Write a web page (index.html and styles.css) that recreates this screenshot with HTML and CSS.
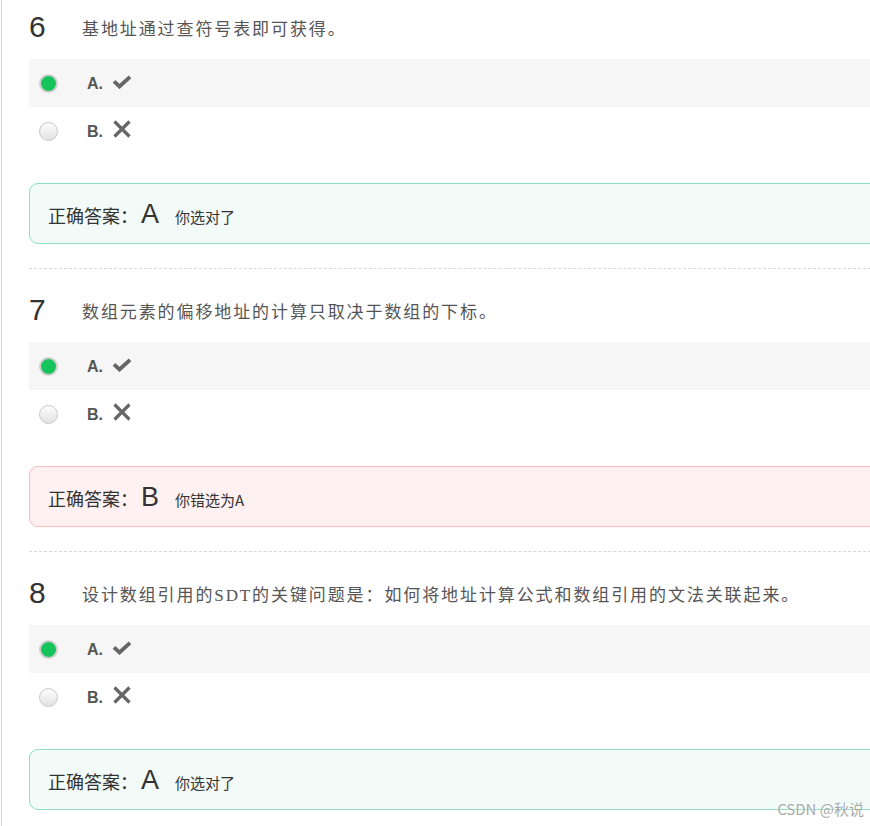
FILE: index.html
```html
<!DOCTYPE html>
<html lang="zh-CN">
<head>
<meta charset="utf-8">
<title>题目</title>
<link rel="stylesheet" href="styles.css">
</head>
<body>
<div class="page">

  <section class="question first">
    <div class="q-title"><span class="q-num">6</span><span class="q-text">基地址通过查符号表即可获得。</span></div>
    <div class="options">
      <div class="option selected"><span class="radio on"></span><span class="opt-label">A.</span>
        <svg class="icon" width="20" height="14" viewBox="0 0 20 14"><polyline points="2,6.3 7.5,11.5 18,1.8" fill="none" stroke="#666" stroke-width="3.8"/></svg></div>
      <div class="option"><span class="radio"></span><span class="opt-label">B.</span>
        <svg class="icon x" width="20" height="20" viewBox="0 0 20 20"><path d="M2.5 2.5 L17.5 17.5 M17.5 2.5 L2.5 17.5" fill="none" stroke="#666" stroke-width="3.2"/></svg></div>
    </div>
    <div class="answer right"><span class="ans-k">正确答案：</span><span class="ans-v">A</span><span class="ans-note">你选对了</span></div>
    <div class="sep"></div>
  </section>

  <section class="question">
    <div class="q-title"><span class="q-num">7</span><span class="q-text">数组元素的偏移地址的计算只取决于数组的下标。</span></div>
    <div class="options">
      <div class="option selected"><span class="radio on"></span><span class="opt-label">A.</span>
        <svg class="icon" width="20" height="14" viewBox="0 0 20 14"><polyline points="2,6.3 7.5,11.5 18,1.8" fill="none" stroke="#666" stroke-width="3.8"/></svg></div>
      <div class="option"><span class="radio"></span><span class="opt-label">B.</span>
        <svg class="icon x" width="20" height="20" viewBox="0 0 20 20"><path d="M2.5 2.5 L17.5 17.5 M17.5 2.5 L2.5 17.5" fill="none" stroke="#666" stroke-width="3.2"/></svg></div>
    </div>
    <div class="answer wrong"><span class="ans-k">正确答案：</span><span class="ans-v">B</span><span class="ans-note">你错选为A</span></div>
    <div class="sep"></div>
  </section>

  <section class="question">
    <div class="q-title"><span class="q-num">8</span><span class="q-text">设计数组引用的SDT的关键问题是：如何将地址计算公式和数组引用的文法关联起来。</span></div>
    <div class="options">
      <div class="option selected"><span class="radio on"></span><span class="opt-label">A.</span>
        <svg class="icon" width="20" height="14" viewBox="0 0 20 14"><polyline points="2,6.3 7.5,11.5 18,1.8" fill="none" stroke="#666" stroke-width="3.8"/></svg></div>
      <div class="option"><span class="radio"></span><span class="opt-label">B.</span>
        <svg class="icon x" width="20" height="20" viewBox="0 0 20 20"><path d="M2.5 2.5 L17.5 17.5 M17.5 2.5 L2.5 17.5" fill="none" stroke="#666" stroke-width="3.2"/></svg></div>
    </div>
    <div class="answer right"><span class="ans-k">正确答案：</span><span class="ans-v">A</span><span class="ans-note">你选对了</span></div>
  </section>

</div>
<div class="watermark">CSDN @秋说</div>
</body>
</html>
```

FILE: styles.css
```css
html, body {
  margin: 0;
  padding: 0;
  overflow: hidden;
  background: #fff;
  height: 826px;
}
body {
  font-family: "Liberation Sans", "Noto Sans CJK SC", sans-serif;
  color: #333;
  position: relative;
}
.page {
  margin-left: 1px;
  border-left: 1px solid #d4d4d4;
  padding: 7px 0 0 27px;
  width: 900px;
  min-height: 826px;
  box-sizing: border-box;
}
.q-title {
  display: flex;
  align-items: center;
  height: 40px;
  margin-top: 21px;
}
.question.first .q-title {
  margin-top: 0;
}
.q-num {
  width: 53px;
  flex: none;
  font-family: "Liberation Sans", sans-serif;
  font-size: 30px;
  color: #333;
}
.q-text {
  font-family: "Liberation Serif", "Noto Sans CJK SC", serif;
  font-size: 17px;
  letter-spacing: 1.9px;
  color: #555;
  white-space: nowrap;
}
.options {
  margin-top: 12px;
}
.option {
  display: flex;
  align-items: center;
  height: 48px;
  padding-left: 10px;
}
.option.selected {
  background: #f6f6f6;
}
.radio {
  width: 19px;
  height: 19px;
  box-sizing: border-box;
  border-radius: 50%;
  border: 1px solid #c9c9c9;
  background: linear-gradient(#fdfdfd, #e2e2e2);
  margin-right: 29px;
  flex: none;
}
.radio.on {
  background: #15c45a;
  border: 2px solid #d0d0d0;
}
.opt-label {
  font-family: "Liberation Sans", sans-serif;
  font-weight: bold;
  font-size: 16px;
  color: #555;
  width: 25px;
  margin-top: 2px;
}
.icon {
  display: block;
  margin-top: -3px;
}
.icon.x {
  margin-top: -4px;
}
.answer {
  margin-top: 28px;
  height: 61px;
  box-sizing: border-box;
  border: 1px solid #8fdfc1;
  border-radius: 9px;
  background: #f2fbf8;
  display: flex;
  align-items: baseline;
  padding: 15px 0 0 18px;
}
.answer.wrong {
  border-color: #f7bcbc;
  background: #fff1f1;
}
.ans-k {
  font-family: "Noto Sans CJK SC", sans-serif;
  font-size: 18px;
  color: #333;
}
.ans-v {
  font-family: "Liberation Sans", sans-serif;
  font-size: 27px;
  color: #333;
  margin-left: 3px;
  width: 34px;
}
.ans-note {
  font-family: "Noto Sans CJK SC", sans-serif;
  font-size: 15px;
  color: #333;
}
.sep {
  margin-top: 24px;
  border-top: 1px dashed #d8d8d8;
}
.watermark {
  position: absolute;
  right: 6px;
  top: 798px;
  font-family: "Noto Sans CJK SC", sans-serif;
  font-size: 15px;
  color: rgba(140, 140, 140, 0.75);
  text-shadow: 0 0 2px #fff;
}
```
